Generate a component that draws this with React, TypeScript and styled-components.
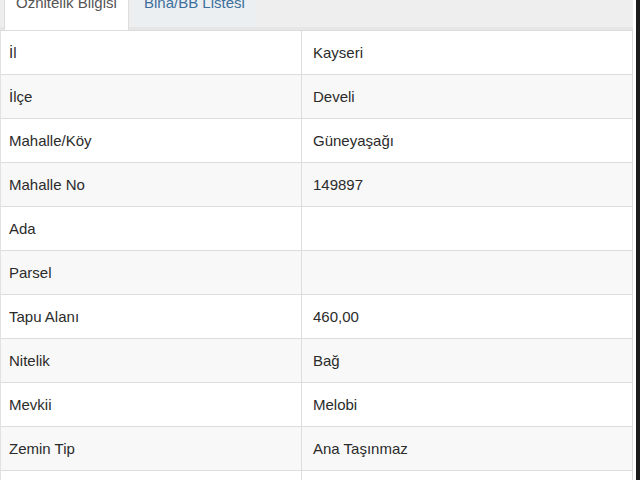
import React from 'react';
import styled, { createGlobalStyle } from 'styled-components';

const GlobalStyle = createGlobalStyle`
  html, body {
    margin: 0;
    padding: 0;
    background: #fff;
    font-family: "Liberation Sans", Arial, sans-serif;
    font-size: 15px;
    color: #2b2b2b;
    overflow: hidden;
  }
`;

const Page = styled.div`
  display: flex;
  width: 640px;
  height: 480px;
  overflow: hidden;
`;

const Main = styled.div`
  flex: 1;
  display: flex;
  flex-direction: column;
  padding-right: 3px;
  background: #fff;
`;

const Edge = styled.div`
  width: 4px;
  background: #1c1c1c;
`;

const TabBar = styled.div`
  display: flex;
  flex-shrink: 0;
  height: 30px;
  padding-left: 4px;
  background: #eeeeee;
  border-bottom: 1px solid #dcdcdc;
  box-shadow: inset 0 -3px 0 #e6e6e6;
  overflow: hidden;
`;

const Tab = styled.div<{ $active?: boolean }>`
  display: flex;
  align-items: flex-start;
  padding: ${(p) => (p.$active ? '0 11px 0 11px' : '0 11px')};
  width: ${(p) => (p.$active ? '125px' : 'auto')};
  box-sizing: border-box;
  margin-left: ${(p) => (p.$active ? '0' : '4px')};
  height: ${(p) => (p.$active ? '31px' : '26px')};
  background: ${(p) => (p.$active ? '#fff' : '#ebeff2')};
  border-left: ${(p) => (p.$active ? '1px solid #ddd' : 'none')};
  border-right: ${(p) => (p.$active ? '1px solid #ddd' : 'none')};
  color: ${(p) => (p.$active ? '#555' : '#3d6f9c')};
  position: relative;
  z-index: 1;
`;

const TabLabel = styled.span`
  margin-top: -7px;
  line-height: 20px;
  white-space: nowrap;
`;

const Table = styled.div`
  display: grid;
  flex-shrink: 0;
  grid-template-columns: 300px 1fr;
  border-left: 1px solid #e2e2e2;
  border-right: 1px solid #dddddd;
`;

const Cell = styled.div<{ $striped: boolean; $value?: boolean }>`
  height: 43px;
  display: flex;
  align-items: center;
  padding-left: ${(p) => (p.$value ? '11px' : '8px')};
  background: ${(p) => (p.$striped ? '#f8f8f8' : '#fff')};
  border-bottom: 1px solid #dddddd;
  border-left: ${(p) => (p.$value ? '1px solid #dddddd' : 'none')};
  white-space: nowrap;
`;

const rows: [string, string][] = [
  ['İl', 'Kayseri'],
  ['İlçe', 'Develi'],
  ['Mahalle/Köy', 'Güneyaşağı'],
  ['Mahalle No', '149897'],
  ['Ada', ''],
  ['Parsel', ''],
  ['Tapu Alanı', '460,00'],
  ['Nitelik', 'Bağ'],
  ['Mevkii', 'Melobi'],
  ['Zemin Tip', 'Ana Taşınmaz'],
  ['', ''],
];

const App: React.FC = () => {
  return (
    <>
      <GlobalStyle />
      <Page>
        <Main>
          <TabBar>
            <Tab $active>
              <TabLabel>Öznitelik Bilgisi</TabLabel>
            </Tab>
            <Tab>
              <TabLabel>Bina/BB Listesi</TabLabel>
            </Tab>
          </TabBar>
          <Table>
            {rows.map(([label, value], i) => (
              <React.Fragment key={i}>
                <Cell $striped={i % 2 === 1}>{label}</Cell>
                <Cell $striped={i % 2 === 1} $value>
                  {value}
                </Cell>
              </React.Fragment>
            ))}
          </Table>
        </Main>
        <Edge />
      </Page>
    </>
  );
};

export default App;
